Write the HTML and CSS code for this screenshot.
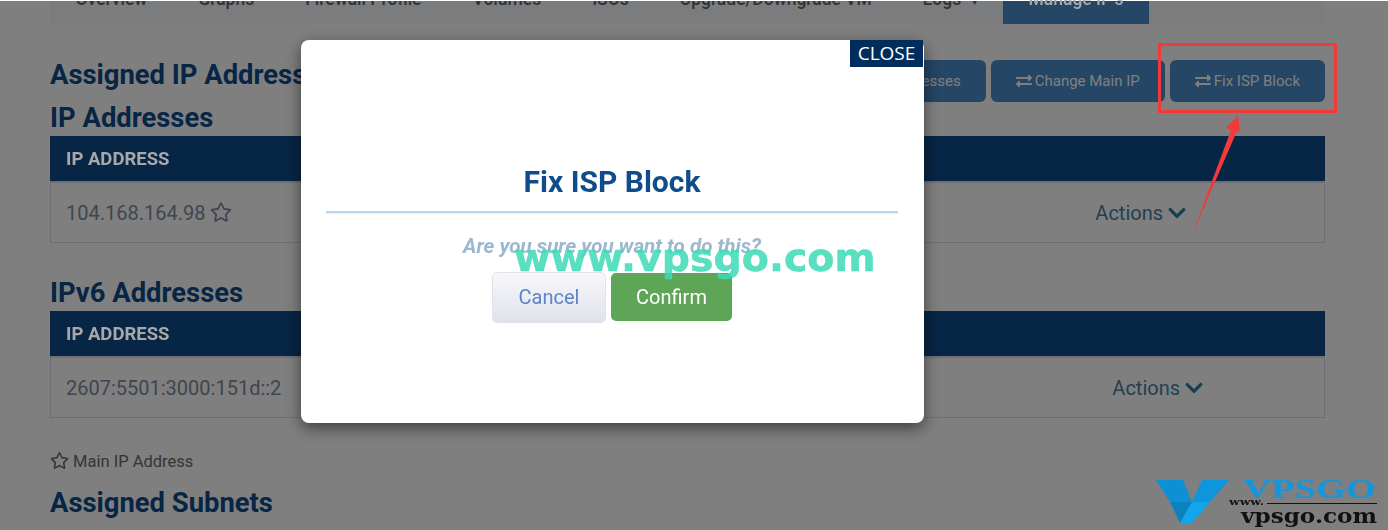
FILE: index.html
```html
<!DOCTYPE html>
<html lang="en">

<head>
	<meta charset="UTF-8">
	<meta name="viewport" content="width=device-width, initial-scale=1.0">
	<title>Manage IPs</title>
	<link rel="stylesheet" href="styles.css">
</head>

<body>
	<svg class="icon-defs" aria-hidden="true">
		<symbol id="i-exchange" viewBox="0 0 512 512"><path d="M0 168v-16c0-13.255 10.745-24 24-24h360V80c0-21.367 25.899-32.042 40.971-16.971l80 80c9.372 9.373 9.372 24.569 0 33.941l-80 80C409.956 271.982 384 261.456 384 240v-48H24c-13.255 0-24-10.745-24-24zm488 152H128v-48c0-21.314-25.862-32.08-40.971-16.971l-80 80c-9.372 9.373-9.372 24.569 0 33.941l80 80C102.057 463.997 128 453.437 128 432v-48h360c13.255 0 24-10.745 24-24v-16c0-13.255-10.745-24-24-24z"/></symbol>
		<symbol id="i-star" viewBox="0 0 576 512"><path d="M528.1 171.5L382 150.2 316.7 17.8c-11.7-23.6-45.6-23.9-57.4 0L194 150.2 47.9 171.5c-26.2 3.8-36.7 36.1-17.7 54.6l105.7 103-25 145.5c-4.5 26.3 23.2 46 46.4 33.7L288 439.6l130.7 68.7c23.2 12.2 50.9-7.4 46.4-33.7l-25-145.5 105.7-103c19-18.5 8.5-50.8-17.7-54.6zM388.6 312.3l23.7 138.4L288 385.4l-124.3 65.3 23.7-138.4-100.6-98 139-20.2 62.2-126 62.2 126 139 20.2-100.6 98z"/></symbol>
		<symbol id="i-chevron" viewBox="0 0 448 512"><path d="M207.029 381.476L12.686 187.132c-9.373-9.373-9.373-24.569 0-33.941l22.667-22.667c9.357-9.357 24.522-9.375 33.901-.04L224 284.505l154.745-154.021c9.379-9.335 24.544-9.317 33.901.04l22.667 22.667c9.373 9.373 9.373 24.569 0 33.941L240.971 381.476c-9.373 9.372-24.569 9.372-33.942 0z"/></symbol>
	</svg>

	<div class="page">
		<nav class="tabs">
			<a class="tab">Overview</a>
			<a class="tab">Graphs</a>
			<a class="tab">Firewall Profile</a>
			<a class="tab">Volumes</a>
			<a class="tab">ISOs</a>
			<a class="tab">Upgrade/Downgrade VM</a>
			<a class="tab">Logs <span class="caret">▾</span></a>
			<a class="tab active"><span class="lift">Manage IP's</span></a>
		</nav>

		<div class="section-head">
			<h2>Assigned IP Addresses</h2>
			<div class="actions-bar">
				<a class="btn"><svg class="icon"><use href="#i-exchange"/></svg> Request IP Addresses</a>
				<a class="btn"><svg class="icon"><use href="#i-exchange"/></svg> Change Main IP</a>
				<a class="btn"><svg class="icon"><use href="#i-exchange"/></svg> Fix ISP Block</a>
			</div>
		</div>

		<h2>IP Addresses</h2>
		<table class="ip-table">
			<thead>
				<tr><th><span class="lift">IP ADDRESS</span></th></tr>
			</thead>
			<tbody>
				<tr>
					<td>
						<div class="ip-row">
							<span>104.168.164.98 <svg class="icon star"><use href="#i-star"/></svg></span>
							<span class="row-actions first">Actions <svg class="icon chevron"><use href="#i-chevron"/></svg></span>
						</div>
					</td>
				</tr>
			</tbody>
		</table>

		<h2 class="next-table">IPv6 Addresses</h2>
		<table class="ip-table">
			<thead>
				<tr><th><span class="lift">IP ADDRESS</span></th></tr>
			</thead>
			<tbody>
				<tr>
					<td>
						<div class="ip-row">
							<span>2607:5501:3000:151d::2</span>
							<span class="row-actions">Actions <svg class="icon chevron"><use href="#i-chevron"/></svg></span>
						</div>
					</td>
				</tr>
			</tbody>
		</table>

		<p class="legend"><svg class="icon legend-star"><use href="#i-star"/></svg> Main IP Address</p>
		<h2 class="subnets">Assigned Subnets</h2>
	</div>

	<div class="overlay"></div>

	<div class="modal">
		<a class="modal-close">CLOSE</a>
		<h3 class="modal-title">Fix ISP Block</h3>
		<p class="modal-text">Are you sure you want to do this?</p>
		<div class="modal-buttons">
			<button class="cancel">Cancel</button>
			<button class="confirm">Confirm</button>
		</div>
	</div>

	<!-- annotations added on top of the screenshot -->
	<div class="red-box"></div>
	<svg class="red-arrow" width="60" height="130" viewBox="0 0 60 130">
		<polygon points="2,120 41,15 36,13 48,0 50,17 47,16" fill="#f33a3a"/>
	</svg>
	<div class="watermark">www.vpsgo.com</div>

	<svg class="logo" width="232" height="60" viewBox="0 0 232 60">
		<polygon points="0,10 27,10 36,32 14,32" fill="#0e90d4"/>
		<polygon points="14,32 36,32 24,53" fill="#0a82c0"/>
		<polygon points="46,10 73,10 54,32 36,32" fill="#0e96dc"/>
		<polygon points="36,32 54,32 36,53 24,53" fill="#10a5ec"/>
		<text x="87" y="28" class="logo-name" textLength="133" lengthAdjust="spacingAndGlyphs">VPSGO</text>
		<text x="73" y="35" class="logo-www" textLength="35" lengthAdjust="spacingAndGlyphs">www.</text>
		<rect x="111" y="33" width="110" height="1" fill="#111"/>
		<text x="85" y="53" class="logo-url" textLength="136" lengthAdjust="spacingAndGlyphs">vpsgo.com</text>
	</svg>

	<div class="edge"></div>
</body>

</html>
```

FILE: styles.css
```css
* {
	box-sizing: border-box;
}

html,
body {
	margin: 0;
	height: 530px;
	overflow: hidden;
}

body {
	background-color: #fff;
	font-family: Roboto, "Liberation Sans", sans-serif;
	color: #7d8ca0;
}

.icon-defs {
	display: none;
}

.icon {
	fill: currentColor;
	vertical-align: -2px;
}

/* text that reads brighter than the dimmed page around it */
.lift {
	position: relative;
	z-index: 1;
}

.page {
	margin-top: -20px;
	padding: 0 63px 0 50px;
}

.tabs {
	display: flex;
	height: 43px;
	background-color: #f6f8fc;
}

.tab {
	height: 44px;
	padding: 9px 25.5px 0;
	font-size: 17.5px;
	font-weight: 500;
	white-space: nowrap;
	color: #666;
}

.tab .caret {
	font-size: 11px;
	margin-left: 6px;
}

.tab.active {
	background-color: #4a8cc8;
	color: #a6a9ad;
}

h2 {
	margin: 0 0 1px 0;
	font-size: 27.4px;
	line-height: 34px;
	font-weight: 700;
	color: #0e4a8a;
}

.section-head {
	display: flex;
	justify-content: space-between;
	height: 43px;
	margin-top: 35px;
}

.actions-bar {
	display: flex;
	gap: 5px;
	margin-top: 2px;
}

.btn {
	display: flex;
	align-items: center;
	justify-content: center;
	gap: 3px;
	height: 42px;
	padding: 0 25px;
	background-color: #4a8cc8;
	border-radius: 6px;
	font-size: 15px;
	color: #fff;
}

.btn .icon {
	width: 16px;
	height: 16px;
	vertical-align: 0;
}

.ip-table {
	width: 100%;
	border-collapse: separate;
	border-spacing: 0;
}

.ip-table th {
	height: 45px;
	padding: 0 16px;
	background-color: #0e4a8a;
	color: #a8a8a8;
	font-size: 18.5px;
	font-weight: 700;
	text-align: left;
}

.ip-table td {
	height: 62px;
	padding: 0 16px 0 15px;
	border: 1px solid #dcdde8;
	border-top-width: 2px;
	font-size: 20px;
	color: #7e8da0;
}

.ip-row {
	display: flex;
	justify-content: space-between;
	align-items: center;
}

.row-actions {
	margin-right: 105px;
	color: #457ea8;
}

.row-actions.first {
	margin-right: 122px;
}

.star {
	width: 22px;
	height: 20px;
}

.chevron {
	width: 18px;
	height: 20px;
	vertical-align: -3px;
	color: #2f7fa8;
}

.next-table {
	margin-top: 33px;
}

.legend {
	margin: 33px 0 0;
	font-size: 16.5px;
	line-height: 22px;
	color: #6a6a6a;
}

.legend-star {
	width: 19px;
	height: 17px;
	vertical-align: -2px;
}

.subnets {
	margin-top: 13px;
}

.overlay {
	position: fixed;
	top: 0;
	left: 0;
	right: 0;
	bottom: 0;
	background-color: rgba(0, 0, 0, 0.5);
}

.modal {
	position: absolute;
	top: 40px;
	left: 301px;
	width: 623px;
	height: 383px;
	padding: 124px 26px 0 25px;
	background-color: #fff;
	border-radius: 8px;
	box-shadow: 0 5px 15px rgba(0, 0, 0, 0.5);
	text-align: center;
}

.modal-close {
	position: absolute;
	top: 0;
	right: 1px;
	width: 73px;
	height: 27px;
	background-color: #002d5c;
	color: #fff;
	font-family: "Open Sans", sans-serif;
	font-size: 19px;
	font-weight: 500;
	line-height: 27px;
}

.modal-title {
	margin: 0;
	padding-bottom: 11px;
	border-bottom: 2px solid #b8d6f0;
	box-shadow: 0 1px 0 #e6eff8;
	font-size: 30px;
	line-height: 36px;
	font-weight: 700;
	color: #0f4c8a;
}

.modal-text {
	margin: 21px 0 0;
	font-size: 20.6px;
	line-height: 24px;
	font-style: italic;
	font-weight: 700;
	color: #9bb8cf;
}

.modal-buttons {
	display: flex;
	justify-content: center;
	align-items: flex-start;
	gap: 5px;
	margin-top: 14px;
}

.modal-buttons button {
	font-family: Roboto, sans-serif;
	font-size: 20px;
	border-radius: 5px;
}

.cancel {
	width: 114px;
	height: 51px;
	padding-bottom: 3px;
	border: 1px solid #e0e2ea;
	background: linear-gradient(#f8f8fc, #dfe2ea);
	color: #5b85c8;
}

.confirm {
	width: 121px;
	height: 48px;
	margin-top: 1px;
	border: none;
	background-color: #5fa558;
	color: #fff;
}

.red-box {
	position: absolute;
	top: 43px;
	left: 1158px;
	width: 179px;
	height: 70px;
	border: 3px solid #f33a3a;
}

.red-arrow {
	position: absolute;
	top: 115px;
	left: 1190px;
}

.watermark {
	position: absolute;
	top: 232px;
	left: 514px;
	font-family: "DejaVu Sans", sans-serif;
	font-size: 39.5px;
	line-height: 50px;
	font-weight: 700;
	-webkit-text-stroke: 0.5px rgba(60, 218, 182, 0.85);
	color: rgba(60, 218, 182, 0.85);
}

.logo {
	position: absolute;
	top: 470px;
	left: 1156px;
}

.logo-name {
	font-family: "Liberation Serif", serif;
	font-size: 27px;
	font-weight: 700;
	fill: #1496dc;
}

.logo-www {
	font-family: "DejaVu Serif", serif;
	font-size: 10px;
	font-weight: 700;
	fill: #111;
}

.logo-url {
	font-family: "DejaVu Serif", serif;
	font-size: 20px;
	font-weight: 700;
	fill: #111;
}

/* 1px white strip at the very top of the capture */
.edge {
	position: absolute;
	top: 0;
	left: 0;
	width: 100%;
	height: 1px;
	background-color: #fff;
}
```
